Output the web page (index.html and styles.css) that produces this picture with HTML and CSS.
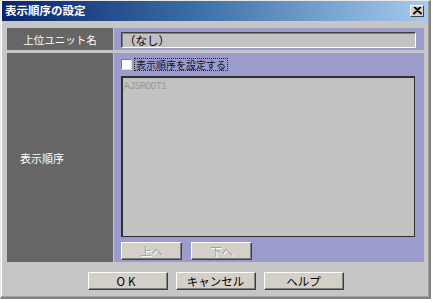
FILE: index.html
```html
<!DOCTYPE html>
<html lang="ja">
<head>
    <meta charset="UTF-8">
    <title>表示順序の設定</title>
    <link rel="stylesheet" href="styles.css">
</head>
<body>
    <div class="window">
        <div class="titlebar">
            <span class="title">表示順序の設定</span>
            <button class="close" type="button">
                <svg width="9" height="8" viewBox="0 0 9 8"><path d="M1 0 L8 7 M8 0 L1 7 M2 0 L9 7 M7 0 L0 7" stroke="#000" stroke-width="1.2"/></svg>
            </button>
        </div>

        <div class="content">
            <div class="form-grid">
                <div class="label-cell centered">上位ユニット名</div>
                <div class="field-cell row-parent">
                    <div class="readonly">（なし）</div>
                </div>

                <div class="label-cell">表示順序</div>
                <div class="field-cell row-order">
                    <label class="check">
                        <span class="box"></span>
                        <span class="focus">表示順序を設定する</span>
                    </label>
                    <div class="listbox">
                        <div class="item">AJSROOT1</div>
                    </div>
                    <div class="move-buttons">
                        <button class="btn small" disabled>上へ</button>
                        <button class="btn small" disabled>下へ</button>
                    </div>
                </div>
            </div>

            <div class="actions">
                <button class="btn wide">OK</button>
                <button class="btn">キャンセル</button>
                <button class="btn">ヘルプ</button>
            </div>
        </div>
    </div>
</body>
</html>
```

FILE: styles.css
```css
body {
    margin: 0;
    background: #ffffff;
    font-family: "Noto Sans CJK JP", "DejaVu Sans", sans-serif;
    font-size: 12px;
}
.window {
    width: 431px;
    height: 299px;
    box-sizing: border-box;
    background: #c6c6c6;
    border-left: 1px solid #e8e8e8;
    border-top: 1px solid #e8e8e8;
    border-right: 2px solid #808080;
    border-bottom: 2px solid #808080;
    box-shadow: inset -1px -1px 0 #a0a0a0, inset 1px 1px 0 #ffffff;
}
.titlebar {
    height: 20px;
    margin: 0 1px;
    display: flex;
    align-items: center;
    justify-content: space-between;
    padding: 0 4px 0 3px;
    background: linear-gradient(to right, #0a246a, #3a6ea5 45%, #a6caf0);
}
.title {
    color: #ffffff;
    font-weight: bold;
    font-size: 11.5px;
    line-height: 1;
}
.close {
    width: 14px;
    height: 12px;
    padding: 0;
    display: flex;
    align-items: center;
    justify-content: center;
    background: #d4d0c8;
    border: 1px solid;
    border-color: #ffffff #404040 #404040 #ffffff;
}
.content {
    padding: 7px 5px 0 6px;
}
.form-grid {
    display: grid;
    grid-template-columns: 106px 310px;
    grid-template-rows: 22px 209px;
    column-gap: 1px;
    row-gap: 3px;
}
.label-cell {
    background: #666666;
    color: #ffffff;
    display: flex;
    align-items: center;
    padding-left: 13px;
    font-size: 11px;
}
.label-cell.centered {
    justify-content: center;
    padding-left: 0;
    font-size: 10.5px;
}
.field-cell {
    background: #9b9bcc;
}
.row-parent {
    padding: 4px 8px 2px 7px;
}
.readonly {
    height: 16px;
    box-sizing: border-box;
    background: #c2c2c2;
    border: 1px solid;
    border-color: #404040 #ffffff #ffffff #404040;
    box-shadow: inset 1px 1px 0 #808080;
    padding-left: 2px;
    line-height: 14px;
    font-size: 11.5px;
    color: #000000;
}
.row-order {
    padding: 5px 9px 0 7px;
    display: flex;
    flex-direction: column;
}
.check {
    display: flex;
    align-items: center;
    gap: 2px;
    height: 13px;
}
.box {
    width: 11px;
    height: 11px;
    box-sizing: border-box;
    background: #ffffff;
    border: 1px solid;
    border-color: #808080 #e0e0e0 #e0e0e0 #808080;
}
.focus {
    border: 1px dotted #202020;
    padding: 0 1px;
    line-height: 11px;
    font-size: 10px;
    color: #101030;
}
.listbox {
    margin-top: 5px;
    height: 161px;
    box-sizing: border-box;
    background: #c2c2c2;
    border: 1px solid #303030;
    border-top-width: 2px;
    border-left-width: 2px;
    padding: 3px 1px;
}
.item {
    font-family: "Liberation Mono", monospace;
    font-size: 10px;
    letter-spacing: -0.7px;
    color: #9a9a9a;
    line-height: 11px;
}
.move-buttons {
    display: flex;
    gap: 9px;
    margin-top: 5px;
}
.btn {
    width: 80px;
    height: 18px;
    padding: 0;
    background: #d4d0c8;
    border: 1px solid;
    border-color: #ffffff #404040 #404040 #ffffff;
    box-shadow: inset -1px -1px 0 #808080;
    font-family: "Noto Sans CJK JP", "DejaVu Sans", sans-serif;
    font-size: 11.5px;
    line-height: 14px;
    color: #000000;
}
.btn.wide {
    letter-spacing: 3px;
}
.btn.small {
    width: 61px;
    color: #a0a0a0;
    text-shadow: 1px 1px 0 #ffffff;
}
.actions {
    display: flex;
    justify-content: center;
    gap: 8px;
    margin-top: 10px;
}
```
